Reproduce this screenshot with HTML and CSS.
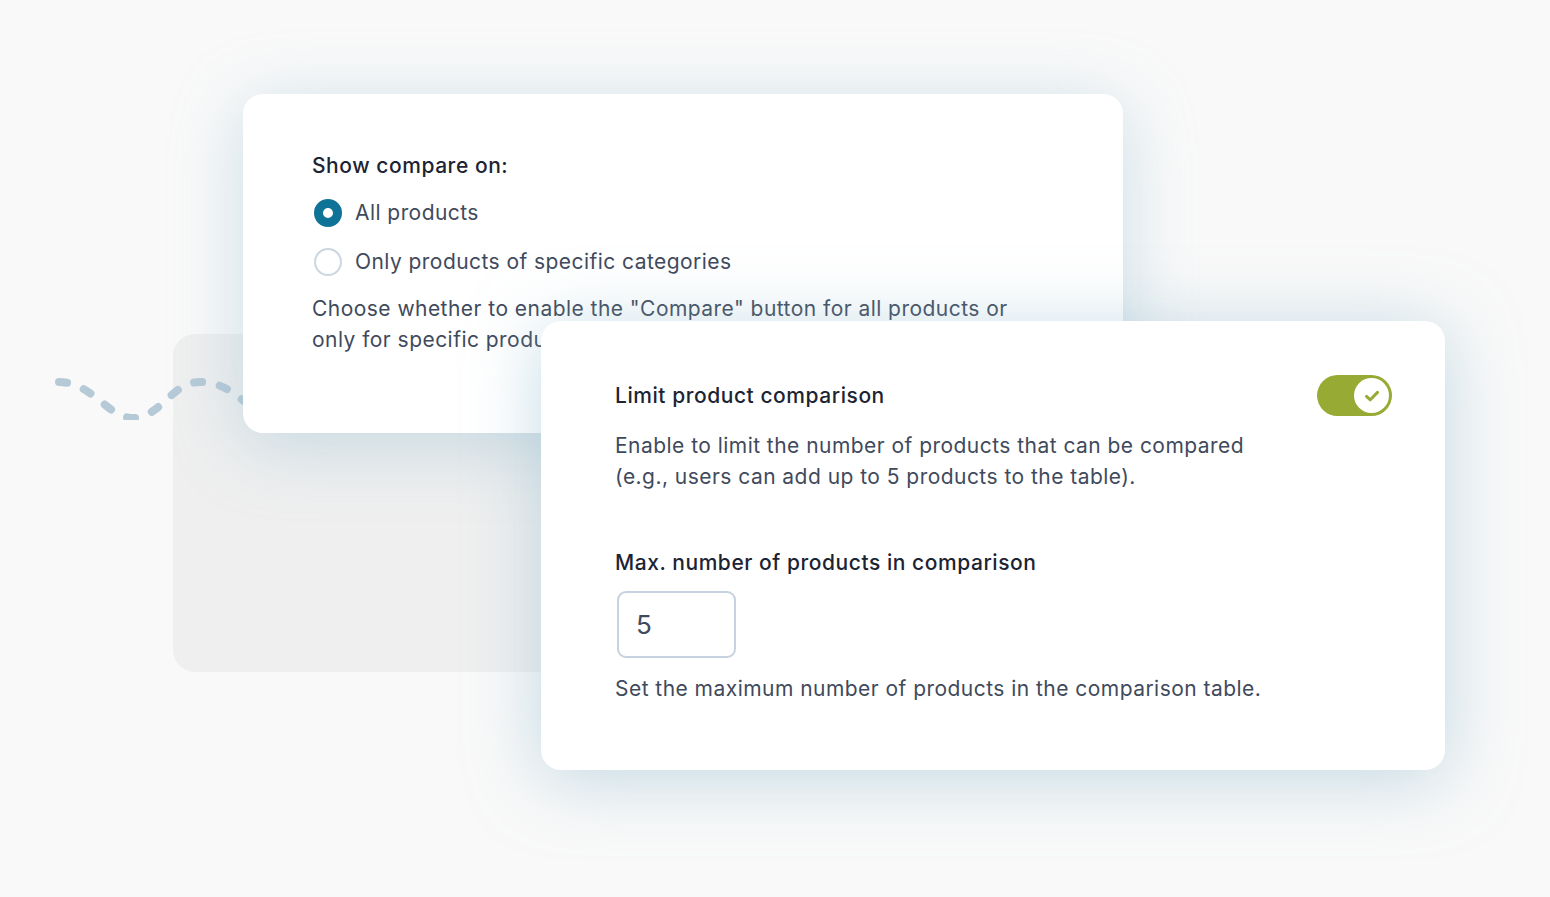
FILE: index.html
```html
<!DOCTYPE html>
<html lang="en">
<head>
<meta charset="utf-8">
<title>Compare settings</title>
<link rel="stylesheet" href="styles.css">
</head>
<body>
<div class="stage">
  <div class="backdrop"></div>
  <svg class="wave" width="260" height="60" viewBox="0 0 260 60">
    <path d="M 59 22 C 92 22, 108 58, 133 58 C 160 58, 172 22, 200 22 C 222 22, 236 34, 252 48" fill="none" stroke="#b6c9d7" stroke-width="8" stroke-linecap="round" stroke-dasharray="8 18"/>
  </svg>
  <section class="card card-show">
    <h2 class="label">Show compare on:</h2>
    <div class="radios">
      <div class="radio-row"><span class="radio checked"></span><span>All products</span></div>
      <div class="radio-row"><span class="radio"></span><span>Only products of specific categories</span></div>
    </div>
    <p class="desc">Choose whether to enable the "Compare" button for all products or<br>only for specific products.</p>
  </section>
  <section class="card card-limit">
    <div class="limit-head">
      <div class="limit-text">
        <h2 class="label">Limit product comparison</h2>
        <p class="desc desc-limit">Enable to limit the number of products that can be compared<br>(e.g., users can add up to 5 products to the table).</p>
      </div>
      <div class="toggle">
        <span class="knob">
          <svg width="18" height="14" viewBox="0 0 18 14"><path d="M3.5 7.4 L7.3 10.8 L14.5 3.4" fill="none" stroke="#97ab34" stroke-width="3" stroke-linecap="round" stroke-linejoin="round"/></svg>
        </span>
      </div>
    </div>
    <h2 class="label label-max">Max. number of products in comparison</h2>
    <div class="number-input">5</div>
    <p class="desc desc-help">Set the maximum number of products in the comparison table.</p>
  </section>
</div>
</body>
</html>
```

FILE: styles.css
```css
html, body {
  margin: 0;
  padding: 0;
}
body {
  background: #f9f9f9;
  font-family: Inter, "Noto Sans", "Liberation Sans", sans-serif;
  width: 1550px;
  height: 897px;
  overflow: hidden;
}
.stage {
  position: relative;
  width: 1550px;
  height: 897px;
}
.backdrop {
  position: absolute;
  left: 173px;
  top: 334px;
  width: 420px;
  height: 338px;
  border-radius: 22px;
  background: #efefef;
}
.wave {
  position: absolute;
  left: 0;
  top: 360px;
}
.card {
  position: absolute;
  background: #ffffff;
  border-radius: 20px;
  box-sizing: border-box;
}
.card-show {
  left: 243px;
  top: 94px;
  width: 880px;
  height: 339px;
  padding: 56px 69px 0 69px;
  box-shadow: 0 12px 70px rgba(140, 185, 205, 0.42);
}
.card-limit {
  left: 541px;
  top: 321px;
  width: 904px;
  height: 449px;
  padding: 59px 53px 0 74px;
  box-shadow: 0 8px 70px rgba(140, 185, 205, 0.5);
}
.label {
  margin: 0;
  font-size: 21px;
  line-height: 31px;
  font-weight: 500;
  letter-spacing: 0.55px;
  color: #1c2433;
}
.desc {
  margin: 0;
  font-size: 21px;
  line-height: 31px;
  font-weight: 400;
  letter-spacing: 0.46px;
  color: #3f4a5c;
}
.radios {
  display: flex;
  flex-direction: column;
  gap: 18px;
  margin-top: 16px;
}
.radio-row {
  display: flex;
  align-items: center;
  gap: 13px;
  margin-left: 2px;
  font-size: 21px;
  line-height: 31px;
  letter-spacing: 0.44px;
  color: #3f4a5c;
}
.radio {
  width: 28px;
  height: 28px;
  box-sizing: border-box;
  border-radius: 50%;
  border: 2px solid #ccd6e1;
  background: #fff;
}
.radio.checked {
  border: 9px solid #0f7297;
  background: #fff;
}
.card-show .desc {
  margin-top: 16px;
}
.limit-head {
  display: flex;
  justify-content: space-between;
  align-items: flex-start;
}
.desc-limit {
  margin-top: 19px;
}
.toggle {
  width: 75px;
  height: 41px;
  border-radius: 21px;
  background: #97ab34;
  box-sizing: border-box;
  padding: 3px;
  display: flex;
  justify-content: flex-end;
  margin-top: -5px;
}
.knob {
  width: 35px;
  height: 35px;
  border-radius: 50%;
  background: #fff;
  display: flex;
  align-items: center;
  justify-content: center;
}
.label-max {
  margin-top: 55px;
}
.number-input {
  margin-top: 13px;
  margin-left: 2px;
  width: 119px;
  height: 67px;
  box-sizing: border-box;
  border: 2px solid #c6d2df;
  border-radius: 9px;
  padding-left: 17px;
  display: flex;
  align-items: center;
  font-size: 26px;
  color: #3f4a5c;
}
.desc-help {
  margin-top: 15px;
}
```
